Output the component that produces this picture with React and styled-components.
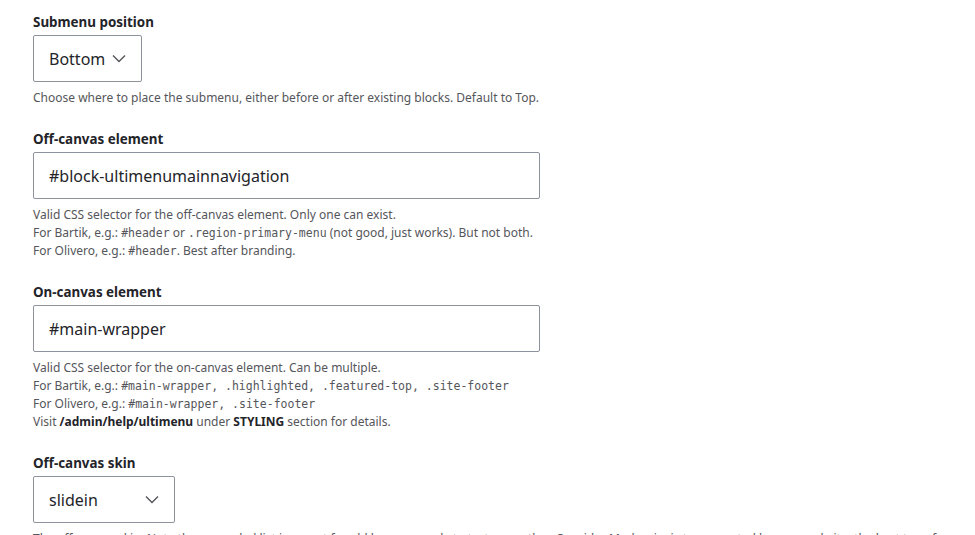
import styled, { createGlobalStyle } from "styled-components";

const GlobalStyle = createGlobalStyle`
  body {
    margin: 0;
    background: #fff;
    font-family: "Noto Sans", "Open Sans", sans-serif;
    color: #232429;
  }
`;

const Page = styled.div`
  padding: 14px 0 0 33px;
  height: 535px;
  overflow: hidden;
  box-sizing: border-box;
`;

const Field = styled.div`
  display: flex;
  flex-direction: column;
  margin-bottom: 24px;
`;

const Label = styled.label`
  font-size: 13.4px;
  font-weight: 700;
  line-height: 16px;
  margin-bottom: 5px;
  color: #232429;
`;

const Box = styled.div`
  box-sizing: border-box;
  height: 47px;
  width: ${(p) => p.$width}px;
  border: 1px solid #8e929c;
  border-radius: 2px;
  display: flex;
  align-items: center;
  justify-content: space-between;
  padding: 0 15px;
  font-size: 16px;
  color: #232429;
`;

const Chevron = () => (
  <svg width="14" height="9" viewBox="0 0 14 9" fill="none">
    <path d="M1 1.5l6 6 6-6" stroke="#55565b" strokeWidth="1.4" />
  </svg>
);

const Description = styled.div`
  margin-top: 7px;
  font-size: 12px;
  line-height: 18px;
  color: #55565b;
`;

const Code = styled.code`
  font-family: "DejaVu Sans Mono", "Liberation Mono", monospace;
  font-size: 11.5px;
`;

const Strong = styled.strong`
  font-weight: 700;
  color: #232429;
`;

const App = () => (
  <>
    <GlobalStyle />
    <Page>
      <Field>
        <Label>Submenu position</Label>
        <Box $width={109}>
          <span>Bottom</span>
          <Chevron />
        </Box>
        <Description>
          Choose where to place the submenu, either before or after existing blocks. Default to Top.
        </Description>
      </Field>

      <Field>
        <Label>Off-canvas element</Label>
        <Box $width={507}>#block-ultimenumainnavigation</Box>
        <Description>
          Valid CSS selector for the off-canvas element. Only one can exist.
          <br />
          For Bartik, e.g.: <Code>#header</Code> or <Code>.region-primary-menu</Code> (not good, just works). But not both.
          <br />
          For Olivero, e.g.: <Code>#header</Code>. Best after branding.
        </Description>
      </Field>

      <Field>
        <Label>On-canvas element</Label>
        <Box $width={507}>#main-wrapper</Box>
        <Description>
          Valid CSS selector for the on-canvas element. Can be multiple.
          <br />
          For Bartik, e.g.: <Code>#main-wrapper, .highlighted, .featured-top, .site-footer</Code>
          <br />
          For Olivero, e.g.: <Code>#main-wrapper, .site-footer</Code>
          <br />
          Visit <Strong>/admin/help/ultimenu</Strong> under <Strong>STYLING</Strong> section for details.
        </Description>
      </Field>

      <Field>
        <Label>Off-canvas skin</Label>
        <Box $width={142}>
          <span>slidein</span>
          <Chevron />
        </Box>
        <Description>
          The off-canvas skin. Note the appended list is meant for old browsers only to test your other. Consider Modernizr is to supported by your website, the best transforms for off-canvas.
        </Description>
      </Field>
    </Page>
  </>
);

export default App;
